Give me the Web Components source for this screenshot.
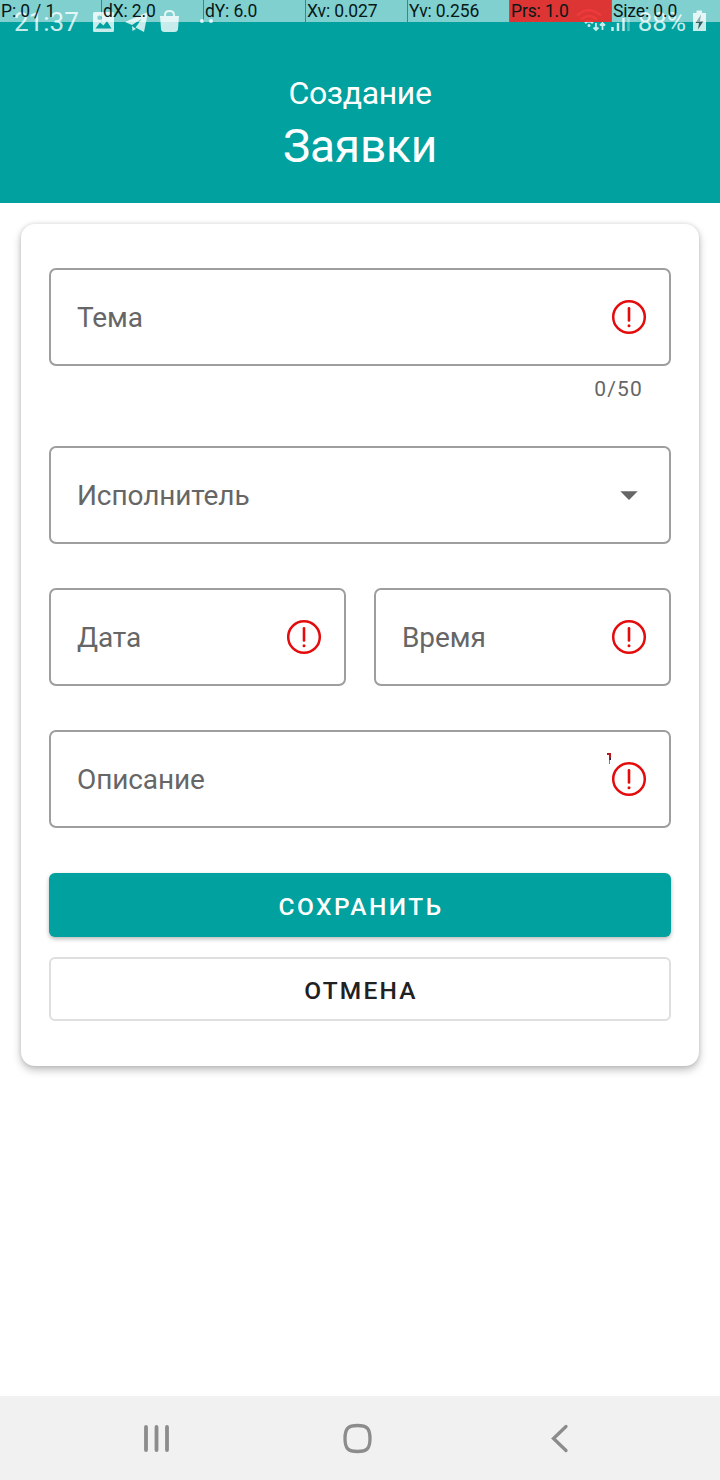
<!DOCTYPE html>
<html lang="ru">
<head>
<meta charset="utf-8">
<title>Создание заявки</title>
<style>
html,body{margin:0;padding:0;background:#fff}
body{font-family:Roboto,"Noto Sans",sans-serif;width:720px;height:1480px;overflow:hidden}
</style>
</head>
<body>
<request-app></request-app>
<script>
function define(name, html) {
  const tpl = document.createElement('template');
  tpl.innerHTML = html;
  customElements.define(name, class extends HTMLElement {
    constructor() {
      super();
      this.attachShadow({mode: 'open'}).append(tpl.content.cloneNode(true));
    }
  });
}

define('pointer-cell', `<style>
:host{display:block;height:22px;background:rgba(255,255,255,.5);color:#081818;font-size:17.5px;letter-spacing:-.14px;line-height:22px;padding-left:1px;box-sizing:border-box;white-space:nowrap;overflow:hidden}
:host([hot]){background:rgba(240,42,42,.92)}
</style><slot></slot>`);

define('pointer-bar', `<style>
:host{position:absolute;left:0;top:0;width:720px;display:grid;grid-template-columns:repeat(6,101px) 1fr;column-gap:1px}
</style>
<pointer-cell>P: 0 / 1</pointer-cell><pointer-cell>dX: 2.0</pointer-cell><pointer-cell>dY: 6.0</pointer-cell><pointer-cell>Xv: 0.027</pointer-cell><pointer-cell>Yv: 0.256</pointer-cell><pointer-cell hot>Prs: 1.0</pointer-cell><pointer-cell>Size: 0.0</pointer-cell>`);

define('status-bar', `<style>
:host{display:flex;height:42px;color:#c8ecec;font-size:26px;line-height:44px;padding:0 13px 0 14px;box-sizing:border-box;text-align:left}
.time{width:78px}
svg{display:block;flex:none}
.gap{flex:1}
</style>
<span class="time">21:37</span>
<svg width="124" height="42" fill="#c8ecec">
<path fill-rule="evenodd" d="M2.500 12H20.500Q22 12 22 13.500V30.500Q22 32 20.500 32H2.500Q1 32 1 30.500V13.500Q1 12 2.500 12ZM3.500 28.500H19.500L15 21L11.500 25.500L8 22.500ZM7.500 15.500A2.200 2.200 0 1 0 7.500 19.900A2.200 2.200 0 0 0 7.500 15.500Z"/>
<path d="M33 22L56 12L52 32L43.500 27.500L50 18.500L40 25Z"/><path d="M40 26L44 29L40.500 31Z"/>
<path d="M68 16H87L86 29Q85.700 32 82.500 32H72.500Q69.300 32 69 29Z"/><path d="M73 17V15Q73 11 77.500 11T82 15V17" fill="none" stroke="#c8ecec" stroke-width="2"/>
<circle cx="110" cy="21" r="2"/><circle cx="119" cy="21" r="2"/>
</svg>
<span class="gap"></span>
<svg width="55" height="42" style="margin-right:7px" fill="none" stroke="#c8ecec" stroke-width="2.500">
<path d="M1 15.500Q13 5 25 15.500M5 19.500Q13 12.500 21 19.500M9 23Q13 19.500 17 23"/>
<circle cx="13" cy="25.500" r="1.500" fill="#c8ecec" stroke="none"/>
<path d="M20 23V30M17.500 27.500L20 30L22.500 27.500M26.500 30V23M24 25.500L26.500 23L29 25.500" stroke-width="1.800"/>
<path d="M36.500 31V27M42 31V23M47.500 31V18"/><path d="M52.500 31V13" stroke-opacity=".4"/>
</svg>
<span class="pct">88%</span>
<svg width="15" height="42" style="margin-left:6px"><path d="M1 13H4.500V10.500H10V13H14V31H1Z" fill="#c8ecec"/><path d="M9 14.500L3.500 23H7L6 29.500L11.500 21H8Z" fill="#315f60"/></svg>`);

define('page-header', `<style>
:host{display:block;height:203px;background:#00a19f;color:#fff;text-align:center}
.sub{font-size:32px;line-height:38px;margin-top:32px;letter-spacing:-.35px}
.main{font-size:46px;line-height:54px;margin-top:7px;letter-spacing:-.2px}
</style><status-bar></status-bar>
<div class="sub"><slot name="sub"></slot></div><div class="main"><slot></slot></div>`);

define('error-icon', `<style>:host{display:block;width:36px;height:36px}svg{display:block}</style>
<svg width="36" height="36"><circle cx="18" cy="18" r="15.800" fill="none" stroke="#e30b0b" stroke-width="2.500"/><path d="M18 9.200V21.500" stroke="#e30b0b" stroke-width="2.600" stroke-linecap="round"/><circle cx="18" cy="26.700" r="1.500" fill="#e30b0b"/></svg>`);

define('drop-icon', `<style>:host{display:block;width:36px;height:36px}svg{display:block}</style>
<svg width="36" height="36"><path d="M9.300 14.200H26.700L18 23Z" fill="#666"/></svg>`);

define('form-field', `<style>
:host{display:flex;align-items:center;justify-content:space-between;height:98px;box-sizing:border-box;border:2px solid #9e9e9e;border-radius:7px;padding:0 22px 0 26px;font-size:28px;letter-spacing:-.1px;color:#666;position:relative}
</style><span><slot></slot></span><slot name="icon"></slot><slot name="mark"></slot>`);

define('form-button', `<style>
:host{display:flex;align-items:center;justify-content:center;height:64px;box-sizing:border-box;border-radius:6px;font-size:24.500px;font-weight:500;letter-spacing:2.450px;padding:2px 0 0 2px;background:#00a19f;color:#fff;box-shadow:0 2px 4px rgba(0,0,0,.28)}
:host([outlined]){background:#fff;color:#212121;border:2px solid #dfdfdf;box-shadow:none;letter-spacing:2.200px}
</style><slot></slot>`);

define('form-card', `<style>
:host{display:block;margin:21px 21px 0;height:842px;box-sizing:border-box;padding:44px 28px 0;border-radius:14px;background:#fff;box-shadow:0 4px 8px rgba(0,0,0,.25),0 0 4px rgba(0,0,0,.12)}
</style><slot></slot>`);

define('nav-bar', `<style>
:host{display:flex;height:84px;background:#f1f1f1;align-items:center;justify-content:space-between;padding:0 148px 0 142px;box-sizing:border-box}
svg{display:block}
</style>
<svg width="29" height="32" stroke="#8c8c8c" stroke-width="3.800" stroke-linecap="round"><path d="M4 5V28M14.500 5V28M25 5V28"/></svg>
<svg width="32" height="32"><path d="M16.500 3.500C26 3.500 29 6.500 29 16.500S26 29.500 16.500 29.500S4 26.500 4 16.500S7 3.500 16.500 3.500Z" fill="none" stroke="#8c8c8c" stroke-width="3.300"/></svg>
<svg width="29" height="32"><path d="M23 4.500L10.500 16.500L23 28.500" fill="none" stroke="#8c8c8c" stroke-width="3.300" stroke-linecap="round"/></svg>`);

define('request-app', `<style>
:host{display:flex;flex-direction:column;width:720px;height:1480px;position:relative;background:#fff}
.count{height:80px;box-sizing:border-box;padding:10px 28px 0 0;text-align:right;font-size:21px;line-height:26px;letter-spacing:1.2px;color:#666}
.row{display:grid;grid-template-columns:1fr 1fr;gap:28px;margin:44px 0}
form-button{margin-top:45px}
form-button[outlined]{margin-top:20px}
.grow{flex:1}
.mark{position:absolute;left:556px;top:21px}
</style>
<page-header><span slot="sub">Создание</span>Заявки</page-header>
<form-card>
<form-field>Тема<error-icon slot="icon"></error-icon></form-field>
<div class="count">0/50</div>
<form-field>Исполнитель<drop-icon slot="icon"></drop-icon></form-field>
<div class="row"><form-field>Дата<error-icon slot="icon"></error-icon></form-field><form-field>Время<error-icon slot="icon"></error-icon></form-field></div>
<form-field>Описание<error-icon slot="icon"></error-icon><svg class="mark" slot="mark" width="5" height="12"><path d="M0 0H4V7H2V2H0Z" fill="#b4191d"/><path d="M2 7H3V11H2Z" fill="#b05aa8"/><path d="M3 5H4V7H3Z" fill="#3a1838"/></svg></form-field>
<form-button>СОХРАНИТЬ</form-button>
<form-button outlined>ОТМЕНА</form-button>
</form-card>
<div class="grow"></div>
<nav-bar></nav-bar>
<pointer-bar></pointer-bar>`);
</script>
</body>
</html>
